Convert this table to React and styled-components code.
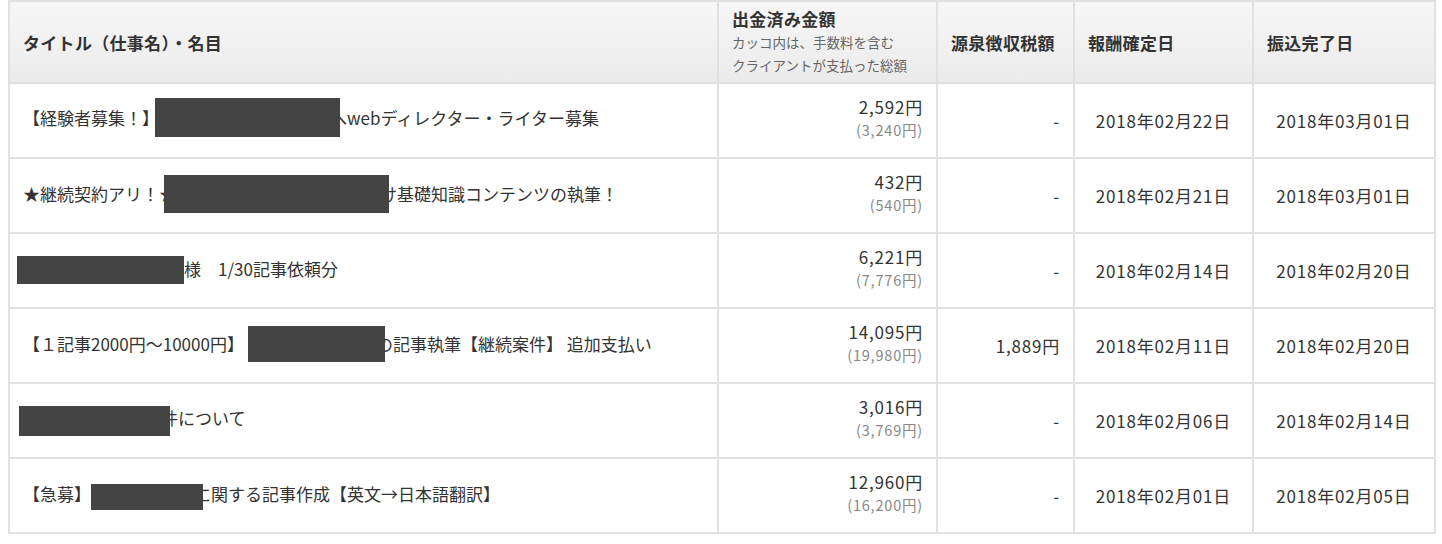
import React from "react";
import styled, { createGlobalStyle } from "styled-components";

const GlobalStyle = createGlobalStyle`
  body {
    margin: 0;
    background: #fff;
    font-family: "Noto Sans CJK JP", "Noto Sans", sans-serif;
    color: #333;
  }
`;

const Wrap = styled.div`
  padding: 0 8px;
`;

const Table = styled.table`
  width: 100%;
  border-collapse: collapse;
  table-layout: fixed;
  font-size: 17px;
`;

const HeadRow = styled.tr`
  height: 82px;
  background: linear-gradient(#f7f7f7, #ebebeb);
`;

const Th = styled.th`
  border: 2px solid #e1e1e1;
  padding: 0 13px;
  text-align: left;
  vertical-align: middle;
  font-size: 17px;
  font-weight: 700;
  color: #333;
  letter-spacing: 0.3px;
`;

const HeadTitle = styled.div`
  line-height: 22px;
  margin-bottom: 1px;
`;

const SubNote = styled.div`
  font-size: 13.5px;
  font-weight: 400;
  color: #666;
  line-height: 23px;
  letter-spacing: 0;
`;

const Row = styled.tr`
  height: 75px;
`;

const Td = styled.td`
  border: 2px solid #e1e1e1;
  padding: 0 13px;
  vertical-align: middle;
  text-align: ${(p) => p.$align || "left"};
  letter-spacing: ${(p) => (p.$num ? "0.8px" : "0")};
  white-space: nowrap;
  overflow: hidden;
`;

const Amount = styled.div`
  font-size: 17px;
  line-height: 22px;
  margin-top: -3px;
`;

const Gross = styled.div`
  font-size: 14.5px;
  line-height: 24px;
  color: #888;
`;

const Redact = styled.span`
  display: inline-block;
  position: relative;
  top: ${(p) => p.$dy || 0}px;
  width: ${(p) => p.$w}px;
  height: ${(p) => p.$h}px;
  margin-left: ${(p) => p.$ml || 0}px;
  margin-right: ${(p) => p.$mr || 0}px;
  background: #444;
  vertical-align: middle;
  z-index: 1;
`;

const rows = [
  {
    title: (
      <>
        【経験者募集！】
        <Redact $w={185} $h={39} $dy={-3} $ml={-4} $mr={-10} />
        へwebディレクター・ライター募集
      </>
    ),
    amount: "2,592円",
    gross: "(3,240円)",
    tax: "-",
    fixed: "2018年02月22日",
    paid: "2018年03月01日",
  },
  {
    title: (
      <>
        ★継続契約アリ！★
        <Redact $w={225} $h={38} $dy={-2} $ml={-12} $mr={-9} />
        け基礎知識コンテンツの執筆！
      </>
    ),
    amount: "432円",
    gross: "(540円)",
    tax: "-",
    fixed: "2018年02月21日",
    paid: "2018年03月01日",
  },
  {
    title: (
      <>
        <Redact $w={167} $h={28} $dy={-1} $ml={-6} />
        様　1/30記事依頼分
      </>
    ),
    amount: "6,221円",
    gross: "(7,776円)",
    tax: "-",
    fixed: "2018年02月14日",
    paid: "2018年02月20日",
  },
  {
    title: (
      <>
        【１記事2000円〜10000円】
        <Redact $w={137} $h={36} $dy={-2} $ml={4} $mr={-9} />
        の記事執筆【継続案件】 追加支払い
      </>
    ),
    amount: "14,095円",
    gross: "(19,980円)",
    tax: "1,889円",
    fixed: "2018年02月11日",
    paid: "2018年02月20日",
  },
  {
    title: (
      <>
        <Redact $w={151} $h={30} $dy={0} $ml={-4} $mr={-9} />
        件について
      </>
    ),
    amount: "3,016円",
    gross: "(3,769円)",
    tax: "-",
    fixed: "2018年02月06日",
    paid: "2018年02月14日",
  },
  {
    title: (
      <>
        【急募】
        <Redact $w={112} $h={26} $dy={0} $mr={-9} />
        に関する記事作成【英文→日本語翻訳】
      </>
    ),
    amount: "12,960円",
    gross: "(16,200円)",
    tax: "-",
    fixed: "2018年02月01日",
    paid: "2018年02月05日",
  },
];

export default function App() {
  return (
    <>
      <GlobalStyle />
      <Wrap>
        <Table>
          <colgroup>
            <col style={{ width: 709 }} />
            <col style={{ width: 219 }} />
            <col style={{ width: 137 }} />
            <col style={{ width: 179 }} />
            <col style={{ width: 182 }} />
          </colgroup>
          <thead>
            <HeadRow>
              <Th>タイトル（仕事名）・名目</Th>
              <Th>
                <HeadTitle>出金済み金額</HeadTitle>
                <SubNote>カッコ内は、手数料を含む</SubNote>
                <SubNote>クライアントが支払った総額</SubNote>
              </Th>
              <Th>源泉徴収税額</Th>
              <Th>報酬確定日</Th>
              <Th>振込完了日</Th>
            </HeadRow>
          </thead>
          <tbody>
            {rows.map((r, i) => (
              <Row key={i}>
                <Td>{r.title}</Td>
                <Td $align="right" $num>
                  <Amount>{r.amount}</Amount>
                  <Gross>{r.gross}</Gross>
                </Td>
                <Td $align="right" $num>
                  {r.tax}
                </Td>
                <Td $align="center" $num>
                  {r.fixed}
                </Td>
                <Td $align="center" $num>
                  {r.paid}
                </Td>
              </Row>
            ))}
          </tbody>
        </Table>
      </Wrap>
    </>
  );
}
